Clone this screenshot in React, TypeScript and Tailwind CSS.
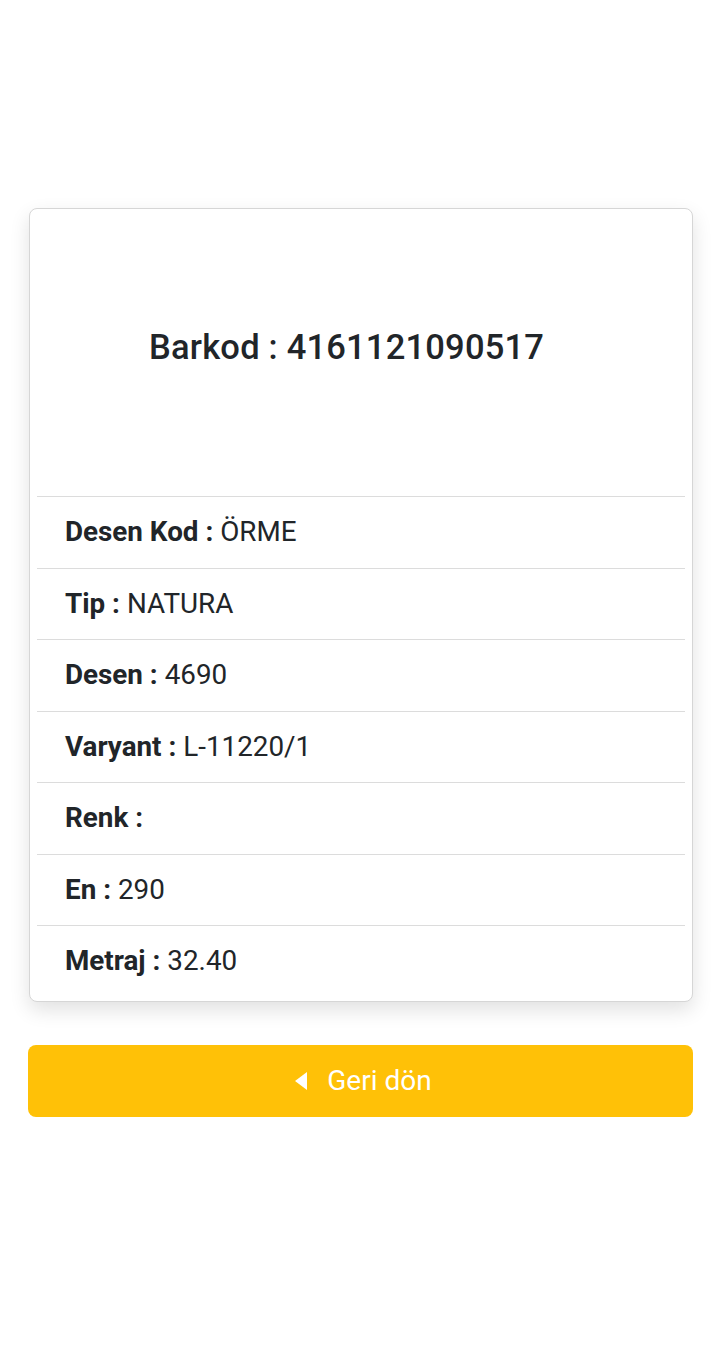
import React from "react";

const rows: [string, string][] = [
  ["Desen Kod :", "ÖRME"],
  ["Tip :", "NATURA"],
  ["Desen :", "4690"],
  ["Varyant :", "L-11220/1"],
  ["Renk :", ""],
  ["En :", "290"],
  ["Metraj :", "32.40"],
];

export default function App() {
  return (
    <div
      className="min-h-[1353px] w-[720px] bg-white text-[#212529]"
      style={{ fontFamily: "Roboto, 'Liberation Sans', sans-serif" }}
    >
      <div className="pt-[208px]">
        <div className="ml-[29px] w-[664px] rounded-[8px] border border-[#d6d6d6] bg-white px-[7px] pb-[4px] shadow-[0_8px_20px_rgba(0,0,0,0.12)]">
          <div className="flex h-[287px] items-center pb-[10px] pl-[112px]">
            <span className="text-[34.5px] font-medium leading-none tracking-[0.2px]">
              Barkod : 4161121090517
            </span>
          </div>
          {rows.map(([k, v]) => (
            <div
              key={k}
              className="flex h-[71.5px] items-center border-t border-[#dcdcdc] pl-[28px] text-[27.8px] leading-none"
            >
              <span className="font-bold">{k}</span>
              {v && <span className="ml-[7px]">{v}</span>}
            </div>
          ))}
        </div>
        <button className="ml-[28px] mt-[43px] flex h-[72px] w-[665px] items-center justify-center gap-[20px] rounded-[8px] bg-[#ffc107] pl-[6px] text-[28px] text-white">
          <svg width="12" height="20" viewBox="0 0 12 20">
            <path d="M12 1 L0 10 L12 19 Z" fill="white" />
          </svg>
          <span>Geri dön</span>
        </button>
      </div>
    </div>
  );
}
